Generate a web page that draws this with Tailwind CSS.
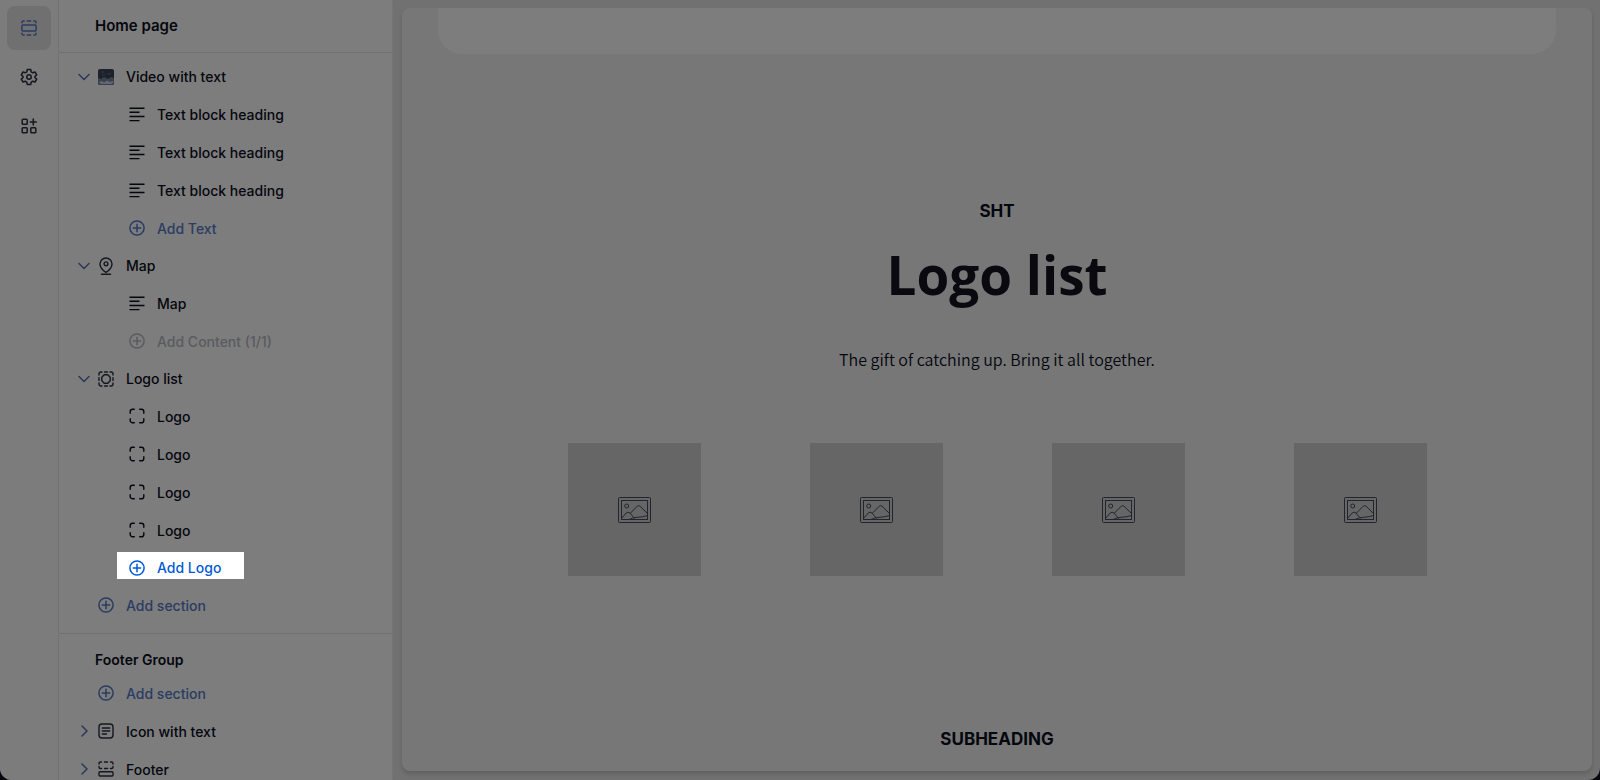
<!DOCTYPE html>
<html lang="en">
<head>
    <meta charset="UTF-8">
    <meta name="viewport" content="width=device-width, initial-scale=1.0">
    <title>Theme editor - Home page</title>
    <script src="https://cdn.jsdelivr.net/npm/@tailwindcss/browser@4"></script>
</head>
<body class="bg-[#07070d] h-screen overflow-hidden font-['Inter',sans-serif] text-[#05070e]">
    <!-- Icons -->
    <svg class="hidden">
        <symbol id="i-down" viewBox="0 0 12 12"><path d="M1 3.5 6 8.5 11 3.5" fill="none" stroke="currentColor" stroke-width="1.5" stroke-linecap="round" stroke-linejoin="round"/></symbol>
        <symbol id="i-right" viewBox="0 0 12 12"><path d="M4 1 9 6 4 11" fill="none" stroke="currentColor" stroke-width="1.5" stroke-linecap="round" stroke-linejoin="round"/></symbol>
        <symbol id="i-text" viewBox="0 0 16 16"><path d="M.5 2.2H15.5M.5 6.3H10.5M.5 10.5H15.5M.5 14.6H10.5" fill="none" stroke="currentColor" stroke-width="1.4"/></symbol>
        <symbol id="i-plus" viewBox="0 0 16 16"><g fill="none" stroke="currentColor" stroke-width="1.5"><circle cx="8" cy="8" r="7.1"/><path d="M8 4.3V11.7M4.3 8H11.7" stroke-linecap="round"/></g></symbol>
        <symbol id="i-logo" viewBox="0 0 16 16"><path d="M1.2 5.3V3.6A2.4 2.4 0 0 1 3.6 1.2H5.3M10.7 1.2H12.4A2.4 2.4 0 0 1 14.8 3.6V5.3M14.8 10.7V12.4A2.4 2.4 0 0 1 12.4 14.8H10.7M5.3 14.8H3.6A2.4 2.4 0 0 1 1.2 12.4V10.7" fill="none" stroke="currentColor" stroke-width="1.4" stroke-linecap="round"/></symbol>
        <symbol id="i-picture" viewBox="0 0 33 26">
            <g fill="none" stroke="currentColor" stroke-width="1">
                <rect x=".5" y=".5" width="32" height="25" rx="1"/>
                <rect x="3.5" y="3.5" width="26" height="19"/>
                <circle cx="8.7" cy="9" r="2"/>
                <path d="M3.5 21.5 8.2 16Q10 14.3 12 16L16.5 21.5M12.5 16 19.3 9.2Q20.7 8 22 9.2L29.5 16.5M11 22.5Q15.5 20.3 20 20.2T29.5 18.5"/>
            </g>
        </symbol>
    </svg>

    <div class="flex h-full overflow-hidden rounded-b-xl bg-[#717171]">
        <!-- Icon rail -->
        <nav class="flex w-[59px] shrink-0 flex-col items-center gap-[5px] border-r border-[#737373] bg-[#7c7c7c] pt-[6px]">
            <button type="button" aria-label="Sections" class="flex size-11 items-center justify-center rounded-lg bg-[#707070] text-[#2a3c62]">
                <svg class="size-4" viewBox="0 0 16 16" fill="none" stroke="currentColor" stroke-width="1.5" stroke-linecap="round">
                    <rect x=".9" y="5" width="14.2" height="6" rx="1"/>
                    <path d="M.9 2.8V2.5A1.6 1.6 0 0 1 2.5.9H3.2M6.3.9H9.7M12.8.9H13.5A1.6 1.6 0 0 1 15.1 2.5V2.8M.9 13.2V13.5A1.6 1.6 0 0 0 2.5 15.1H3.2M6.3 15.1H9.7M12.8 15.1H13.5A1.6 1.6 0 0 0 15.1 13.5V13.2"/>
                </svg>
            </button>
            <button type="button" aria-label="Theme settings" class="flex size-11 items-center justify-center rounded-lg text-[#15181f]">
                <svg class="size-[18px]" viewBox="0 0 18 18" fill="none" stroke="currentColor" stroke-width="1.5" stroke-linejoin="round">
                    <path d="M7.3 1.5H10.7L11.2 3.9 12.7 4.8 15 4 16.7 6.9 14.9 8.5V9.5L16.7 11.1 15 14 12.7 13.2 11.2 14.1 10.7 16.5H7.3L6.8 14.1 5.3 13.2 3 14 1.3 11.1 3.1 9.5V8.5L1.3 6.9 3 4 5.3 4.8 6.8 3.9Z"/>
                    <circle cx="9" cy="9" r="2.2"/>
                </svg>
            </button>
            <button type="button" aria-label="App embeds" class="flex size-11 items-center justify-center rounded-lg text-[#15181f]">
                <svg class="size-4" viewBox="0 0 16 16" fill="none" stroke="currentColor" stroke-width="1.5">
                    <rect x="1.2" y="1.2" width="5" height="5" rx=".8"/>
                    <rect x="1.2" y="9.8" width="5" height="5" rx=".8"/>
                    <rect x="9.8" y="9.8" width="5" height="5" rx=".8"/>
                    <path d="M12.3 1V7M9.3 4H15.3" stroke-linecap="round"/>
                </svg>
            </button>
        </nav>

        <!-- Section tree -->
        <aside class="w-[334px] shrink-0 overflow-hidden border-r border-[#757575] bg-[#7d7d7d] text-[14px] font-[450]">
            <header class="flex h-[53px] items-center border-b border-[#707070] pl-9">
                <h1 class="text-[15px] font-semibold">Home page</h1>
            </header>

            <ul class="border-b border-[#707070] pt-[5px] pb-[9px]">
                <li>
                    <button type="button" aria-expanded="true" class="flex h-[37px] w-full items-center pl-[19px]">
                        <svg class="size-3 text-[#2b385a]"><use href="#i-down"/></svg>
                        <svg class="ml-2 size-4" viewBox="0 0 16 16">
                            <rect width="16" height="16" rx="2" fill="#1d2129"/>
                            <path d="M0 9 3 10 6 8 10 10 13 8 16 9V14A2 2 0 0 1 14 16H2A2 2 0 0 1 0 14Z" fill="#3a4250"/>
                            <path d="M1 13 4 12 6 13.5 9 11.5 12 13 15 12V14L13 15H3Z" fill="#626770"/>
                            <path d="M3 3H6M9 5H13M4 6H7" stroke="#323740"/>
                        </svg>
                        <span class="ml-3">Video with text</span>
                    </button>
                    <ul>
                        <li><button type="button" class="flex h-[38px] w-full items-center gap-3 pl-[70px]"><svg class="size-4"><use href="#i-text"/></svg>Text block heading</button></li>
                        <li><button type="button" class="flex h-[38px] w-full items-center gap-3 pl-[70px]"><svg class="size-4"><use href="#i-text"/></svg>Text block heading</button></li>
                        <li><button type="button" class="flex h-[38px] w-full items-center gap-3 pl-[70px]"><svg class="size-4"><use href="#i-text"/></svg>Text block heading</button></li>
                        <li><button type="button" class="flex h-[38px] w-full items-center gap-3 pl-[70px] text-[#2a3c62]"><svg class="size-4"><use href="#i-plus"/></svg>Add Text</button></li>
                    </ul>
                </li>
                <li>
                    <button type="button" aria-expanded="true" class="flex h-[37px] w-full items-center pl-[19px]">
                        <svg class="size-3 text-[#2b385a]"><use href="#i-down"/></svg>
                        <svg class="ml-2 h-[18px] w-4 text-[#15181f]" viewBox="0 0 16 18" fill="none" stroke="currentColor" stroke-width="1.4" stroke-linecap="round">
                            <path d="M8 15.5C5 13.5 2 10.5 2 7A6 6 0 0 1 14 7C14 10.5 11 13.5 8 15.5ZM3.5 17.2H12.5"/>
                            <circle cx="8" cy="6.8" r="1.9"/>
                        </svg>
                        <span class="ml-3">Map</span>
                    </button>
                    <ul>
                        <li><button type="button" class="flex h-[38px] w-full items-center gap-3 pl-[70px]"><svg class="size-4"><use href="#i-text"/></svg>Map</button></li>
                        <li><button type="button" disabled class="flex h-[38px] w-full items-center gap-3 pl-[70px] text-[#595b5f]"><svg class="size-4"><use href="#i-plus"/></svg>Add Content (1/1)</button></li>
                    </ul>
                </li>
                <li>
                    <button type="button" aria-expanded="true" class="flex h-[37px] w-full items-center pl-[19px]">
                        <svg class="size-3 text-[#2b385a]"><use href="#i-down"/></svg>
                        <svg class="ml-2 size-4 text-[#15181f]" viewBox="0 0 16 16" fill="none" stroke="currentColor" stroke-width="1.4" stroke-linecap="round">
                            <path d="M1 4V3A2 2 0 0 1 3 1H4M6.6 1H9.4M12 1H13A2 2 0 0 1 15 3V4M15 6.6V9.4M15 12V13A2 2 0 0 1 13 15H12M9.4 15H6.6M4 15H3A2 2 0 0 1 1 13V12M1 9.4V6.6"/>
                            <path d="M6.2 3.8H9.8L12.2 6.2V9.8L9.8 12.2H6.2L3.8 9.8V6.2Z" stroke-linejoin="round"/>
                        </svg>
                        <span class="ml-3">Logo list</span>
                    </button>
                    <ul>
                        <li><button type="button" class="flex h-[38px] w-full items-center gap-3 pl-[70px]"><svg class="size-4"><use href="#i-logo"/></svg>Logo</button></li>
                        <li><button type="button" class="flex h-[38px] w-full items-center gap-3 pl-[70px]"><svg class="size-4"><use href="#i-logo"/></svg>Logo</button></li>
                        <li><button type="button" class="flex h-[38px] w-full items-center gap-3 pl-[70px]"><svg class="size-4"><use href="#i-logo"/></svg>Logo</button></li>
                        <li><button type="button" class="flex h-[38px] w-full items-center gap-3 pl-[70px]"><svg class="size-4"><use href="#i-logo"/></svg>Logo</button></li>
                        <li class="h-[37px] pt-[3px] pl-[58px]">
                            <button type="button" class="flex h-[27px] w-[127px] items-center gap-3 bg-white pt-1 pl-3 text-[#005bd3]"><svg class="size-4"><use href="#i-plus"/></svg>Add Logo</button>
                        </li>
                    </ul>
                </li>
                <li><button type="button" class="flex h-[38px] w-full items-center gap-3 pl-[39px] text-[#2a3c62]"><svg class="size-4"><use href="#i-plus"/></svg>Add section</button></li>
            </ul>

            <h2 class="mt-[13px] h-[26px] pl-9 leading-[26px] font-semibold">Footer Group</h2>
            <ul class="pt-px">
                <li><button type="button" class="flex h-[38px] w-full items-center gap-3 pl-[39px] text-[#2a3c62]"><svg class="size-4"><use href="#i-plus"/></svg>Add section</button></li>
                <li>
                    <button type="button" aria-expanded="false" class="flex h-[38px] w-full items-center pl-[19px]">
                        <svg class="size-3 text-[#2b385a]"><use href="#i-right"/></svg>
                        <svg class="ml-2 size-4 text-[#15181f]" viewBox="0 0 16 16" fill="none" stroke="currentColor" stroke-width="1.4" stroke-linecap="round">
                            <rect x="1" y="1" width="14" height="14" rx="3"/>
                            <path d="M4.3 5H11.7M4.3 8H11.7M4.3 11H8.5"/>
                        </svg>
                        <span class="ml-3">Icon with text</span>
                    </button>
                </li>
                <li>
                    <button type="button" aria-expanded="false" class="flex h-[38px] w-full items-center pl-[19px]">
                        <svg class="size-3 text-[#2b385a]"><use href="#i-right"/></svg>
                        <svg class="ml-2 size-4 text-[#15181f]" viewBox="0 0 16 16" fill="none" stroke="currentColor" stroke-width="1.4" stroke-linecap="round">
                            <path d="M1 3V2.5A1.5 1.5 0 0 1 2.5 1H3.5M6.5 1H9.5M12.5 1H13.5A1.5 1.5 0 0 1 15 2.5V3M1 5.5V6A1.5 1.5 0 0 0 2.5 7.5H3.5M6.5 7.5H9.5M12.5 7.5H13.5A1.5 1.5 0 0 0 15 6V5.5"/>
                            <rect x="1" y="10.8" width="14" height="4.2" rx="1"/>
                        </svg>
                        <span class="ml-3">Footer</span>
                    </button>
                </li>
            </ul>
        </aside>

        <!-- Page preview -->
        <main class="flex min-w-0 flex-1 pt-2 pr-2 pb-[9px] pl-[9px]">
            <div class="flex-1 overflow-hidden rounded-lg bg-[#777777] px-9 text-center shadow-[0_3px_4px_rgba(0,0,0,0.15)]">
                <div class="h-[46px] rounded-b-3xl bg-[#7d7d7d]"></div>
                <section class="pt-[145px]">
                    <p class="text-[17px] leading-6 font-bold">SHT</p>
                    <h2 class="mt-4 font-['Open_Sans',sans-serif] text-[53px] leading-[72px] font-bold text-[#09090f]">Logo list</h2>
                    <p class="mt-9 font-['Noto_Sans_CJK_SC',sans-serif] text-[16px] leading-6 font-[350]">The gift of catching up. Bring it all together.</p>
                    <div class="mt-[72px] flex justify-center gap-[109px] text-[#22252c]">
                        <div class="flex size-[133px] items-center justify-center bg-[#666666]"><svg class="h-[26px] w-[33px]"><use href="#i-picture"/></svg></div>
                        <div class="flex size-[133px] items-center justify-center bg-[#666666]"><svg class="h-[26px] w-[33px]"><use href="#i-picture"/></svg></div>
                        <div class="flex size-[133px] items-center justify-center bg-[#666666]"><svg class="h-[26px] w-[33px]"><use href="#i-picture"/></svg></div>
                        <div class="flex size-[133px] items-center justify-center bg-[#666666]"><svg class="h-[26px] w-[33px]"><use href="#i-picture"/></svg></div>
                    </div>
                </section>
                <section class="pt-[151px]">
                    <p class="text-[17px] leading-6 font-bold">SUBHEADING</p>
                </section>
            </div>
        </main>
    </div>
</body>
</html>
